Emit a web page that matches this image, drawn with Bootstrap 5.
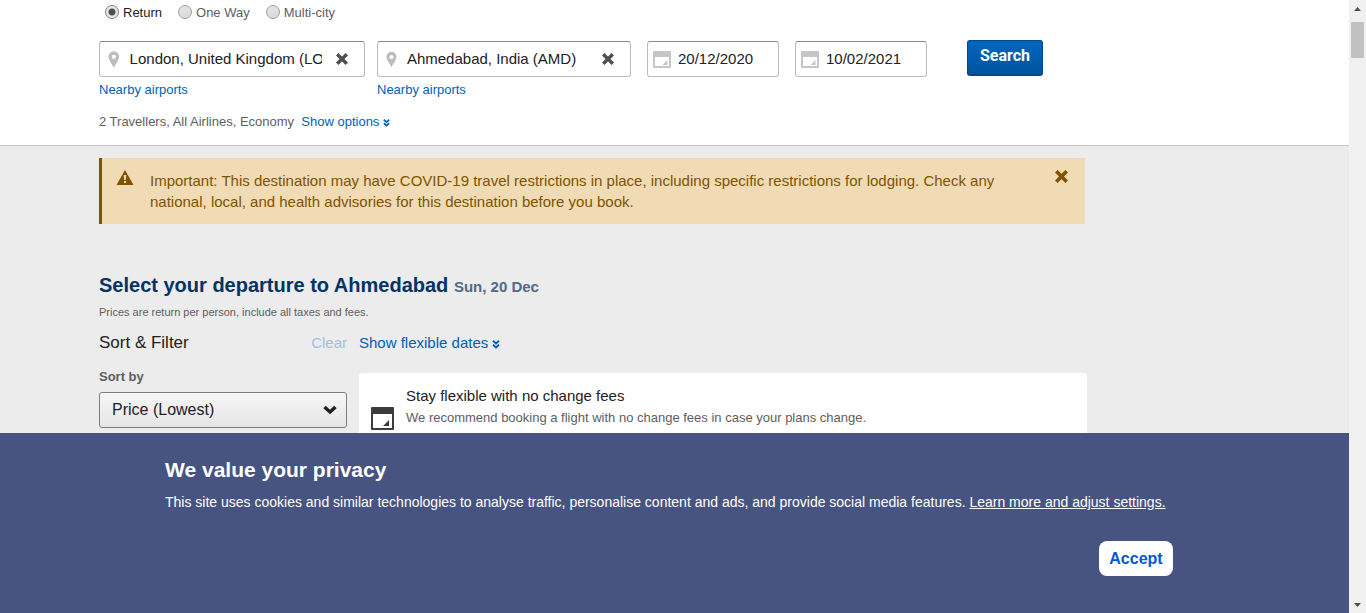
<!DOCTYPE html>
<html lang="en">
<head>
<meta charset="utf-8">
<meta name="viewport" content="width=device-width, initial-scale=1">
<title>Flights to Ahmedabad</title>
<link href="https://cdn.jsdelivr.net/npm/bootstrap@5.3.0/dist/css/bootstrap.min.css" rel="stylesheet">
<style>
  body { font-family: "Liberation Sans", Arial, sans-serif; font-size: 13px; line-height: 16px; color: #5e5e5e; background: #ececec; }
  a { color: #0061b8; text-decoration: none; }
  .wrap { max-width: 1151px; margin: 0 auto; }
  .search-panel { background: #fff; border-bottom: 1px solid #c6c6c6; padding: 4px 0 15px; }
  .trip { height: 18px; padding-left: 6px; }
  .trip input { appearance: none; width: 14px; height: 14px; margin: 0 4px 2px 0; border: 1px solid #a0a0a0; border-radius: 50%; background: linear-gradient(#e4e4e4, #dadada); }
  .trip input:checked { border-color: #808080; background: radial-gradient(circle, #4f4f4f 0 3px, #e8e8e8 4px); }
  .trip input:checked + label { color: #222; }
  .fields { padding-top: 18px; }
  .field { padding-top: 1px; }
  .field-box { height: 36px; border: 1px solid #bcbcbc; border-top-color: #888; border-radius: 3px; background: #fff; padding: 0 8px; margin-bottom: 5px; }
  .field-box input { min-width: 0; border: 0; padding: 0; outline: 0; background: transparent; color: #222; font-size: 15px; }
  .airport { margin: 0 14px 0 10px; }
  .origin { width: 266px; }
  .destination { width: 254px; }
  .travel-date { width: 132px; }
  .travel-date .field-box { padding: 0 5px; gap: 7px; }
  .clear-btn { border: 0; padding: 0; background: none; line-height: 0; color: #4f4f4f; }
  .search-btn { height: 36px; width: 76px; padding: 0 0 3px; border: 1px solid #00488f; border-bottom-width: 2px; border-radius: 3px; background: linear-gradient(#0066bd, #00549c); color: #fff; font-family: Roboto, sans-serif; font-size: 16px; font-weight: 700; }
  .notice { width: 986px; max-width: 100%; margin-top: 12px; border-left: 3px solid #7f5300; background: #f0dbb5; color: #7f5300; padding: 12px 17px 12px 14px; font-size: 15px; line-height: 21px; }
  .notice .clear-btn { color: #7f5300; }
  .results-title { margin: 49px 0 0; font-size: 20px; line-height: 24px; font-weight: 700; color: #003366; }
  .results-title span { font-size: 15px; color: #4f6b87; }
  .price-note { font-size: 11px; margin: 5px 0 0; }
  .results { padding-top: 9px; }
  .filters { width: 248px; }
  .sort-label { font-weight: 700; margin-bottom: 7px; }
  .filter-title { font-size: 17px; line-height: 20px; color: #222; font-weight: 400; }
  .filter-select { width: 100%; height: 36px; appearance: none; border: 1px solid #7d7d7d; border-radius: 3px; background: linear-gradient(#f6f6f6, #e5e5e5); padding: 0 12px; font-size: 16px; color: #222; }
  .chevron { right: 10px; top: 13px; pointer-events: none; }
  .flex-link { font-size: 15px; line-height: 20px; }
  .dimmed { color: #a0c0dd; }
  .offers { width: 728px; }
  .offer { background: #fff; border-radius: 3px 3px 0 0; padding: 13px 12px; height: 100px; gap: 12px; }
  .offer svg { margin-top: 21px; }
  .offer h3 { font-size: 15px; line-height: 20px; color: #222; font-weight: 400; margin: 0 0 4px; }
  .privacy { background: #475380; color: #fff; padding: 24px 0 37px; }
  .privacy .inner { max-width: 1019px; margin: 0 auto; }
  .privacy h2 { font-size: 21px; line-height: 26px; font-weight: 700; margin: 0 0 10px; }
  .privacy p { font-size: 14px; line-height: 18px; margin: 0 0 30px; }
  .privacy a { color: #fff; text-decoration: underline; }
  .accept { width: 74px; height: 35px; border: 0; border-radius: 8px; margin-right: 11px; padding: 0; background: #fff; color: #0057e0; font-weight: 700; font-size: 16px; }
  .scroll-rail { width: 17px; background: #f1f1f1; padding: 7px 0 6px; }
  .scroll-thumb { width: 13px; height: 36px; background: #c1c1c1; margin-top: 11px; }
</style>
</head>
<body>
<svg width="0" height="0" class="position-absolute" aria-hidden="true">
  <symbol id="pin" viewBox="0 0 12 17"><path fill="currentColor" fill-rule="evenodd" d="M6 0a5.500 5.500 0 0 0-5.500 5.500C.5 9 4 13 6 17c2-4 5.500-8 5.500-11.500A5.500 5.500 0 0 0 6 0Zm0 3.500a2.200 2.200 0 1 1 0 4.400 2.200 2.200 0 0 1 0-4.400Z"/></symbol>
  <symbol id="cal-small" viewBox="0 0 18 17"><path fill="currentColor" fill-rule="evenodd" d="M1 0h16a1 1 0 0 1 1 1v15a1 1 0 0 1-1 1H1a1 1 0 0 1-1-1V1a1 1 0 0 1 1-1Zm1 6v9h14V6ZM14.500 9v5H9.500Z"/></symbol>
  <symbol id="cal" viewBox="0 0 23 23"><path fill="currentColor" fill-rule="evenodd" d="M1 0h21a1 1 0 0 1 1 1v21a1 1 0 0 1-1 1H1a1 1 0 0 1-1-1V1a1 1 0 0 1 1-1Zm1 7v14h19V7ZM18 13v6h-6Z"/></symbol>
  <symbol id="cross" viewBox="0 0 12 12"><path stroke="currentColor" stroke-width="3.400" d="m1.200 1.200 9.600 9.600m0-9.600-9.600 9.600"/></symbol>
  <symbol id="down2" viewBox="0 0 8 9"><path fill="none" stroke="currentColor" stroke-width="2" d="m1 .8 3 2.600L7 .8M1 4.800l3 2.600 3-2.600"/></symbol>
</svg>
<div class="d-flex vh-100 overflow-hidden">
  <div class="d-flex flex-column flex-fill">
    <main class="flex-fill overflow-hidden" style="flex-basis:0">
      <form class="search-panel">
        <div class="wrap">
          <div class="trip d-flex align-items-center gap-3">
            <div class="d-flex align-items-center"><input type="radio" name="trip" id="ret" checked><label for="ret">Return</label></div>
            <div class="d-flex align-items-center"><input type="radio" name="trip" id="one"><label for="one">One Way</label></div>
            <div class="d-flex align-items-center"><input type="radio" name="trip" id="multi"><label for="multi">Multi-city</label></div>
          </div>
          <div class="fields d-flex">
            <div class="field origin me-2">
              <div class="field-box d-flex align-items-center">
                <svg width="12" height="17" style="color:#bdbdbd"><use href="#pin"/></svg>
                <input class="airport flex-fill" type="text" aria-label="Flying from" value="London, United Kingdom (LON)">
                <button type="button" class="clear-btn me-2" aria-label="Clear origin"><svg width="12" height="12"><use href="#cross"/></svg></button>
              </div>
              <a href="#">Nearby airports</a>
            </div>
            <div class="field destination ms-1 me-3">
              <div class="field-box d-flex align-items-center">
                <svg width="12" height="17" style="color:#bdbdbd"><use href="#pin"/></svg>
                <input class="airport flex-fill" type="text" aria-label="Flying to" value="Ahmedabad, India (AMD)">
                <button type="button" class="clear-btn me-2" aria-label="Clear destination"><svg width="12" height="12"><use href="#cross"/></svg></button>
              </div>
              <a href="#">Nearby airports</a>
            </div>
            <div class="field travel-date me-3"><div class="field-box d-flex align-items-center">
              <svg width="18" height="17" class="flex-shrink-0" style="color:#c6c6c6"><use href="#cal-small"/></svg>
              <input class="w-100" type="text" aria-label="Departing" value="20/12/2020">
            </div></div>
            <div class="field travel-date me-4"><div class="field-box d-flex align-items-center">
              <svg width="18" height="17" class="flex-shrink-0" style="color:#c6c6c6"><use href="#cal-small"/></svg>
              <input class="w-100" type="text" aria-label="Returning" value="10/02/2021">
            </div></div>
            <button type="submit" class="search-btn ms-3">Search</button>
          </div>
          <div class="pt-3">2 Travellers, All Airlines, Economy <a href="#">&nbsp;Show options <svg width="7" height="8"><use href="#down2"/></svg></a></div>
        </div>
      </form>
      <div class="wrap">
        <div class="notice d-flex" role="alert">
          <svg width="18" height="15" viewBox="0 0 17 15" class="flex-shrink-0 me-3"><path fill="#7f5300" fill-rule="evenodd" d="M8.500 0 17 15H0ZM7.200 5l.5 5h1.600l.5-5Zm.3 6v2h2v-2Z"/></svg>
          <div class="flex-fill pe-5">Important: This destination may have COVID-19 travel restrictions in place, including specific restrictions for lodging. Check any national, local, and health advisories for this destination before you book.</div>
          <button type="button" class="clear-btn align-self-start" aria-label="Dismiss"><svg width="13" height="13"><use href="#cross"/></svg></button>
        </div>
        <h1 class="results-title">Select your departure to Ahmedabad <span>Sun, 20 Dec</span></h1>
        <p class="price-note">Prices are return per person, include all taxes and fees.</p>
        <div class="results d-flex gap-2">
          <div class="filters me-1 pt-1">
            <div class="d-flex justify-content-between mb-3"><h2 class="filter-title mb-0">Sort &amp; Filter</h2><a href="#" class="flex-link dimmed">Clear</a></div>
            <label for="sort" class="sort-label">Sort by</label>
            <div class="position-relative">
              <select id="sort" class="filter-select"><option>Price (Lowest)</option></select>
              <svg class="chevron position-absolute" width="14" height="10" viewBox="0 0 14 10"><path fill="none" stroke="#222" stroke-width="3.500" d="m1.500 2 5.500 5 5.500-5"/></svg>
            </div>
          </div>
          <div class="offers pt-1">
            <a href="#" class="flex-link d-block mb-3 pb-1">Show flexible dates <svg width="8" height="9"><use href="#down2"/></svg></a>
            <div class="offer d-flex">
              <svg width="23" height="23" class="flex-shrink-0" style="color:#3c3c3c"><use href="#cal"/></svg>
              <div><h3>Stay flexible with no change fees</h3>We recommend booking a flight with no change fees in case your plans change.</div>
            </div>
          </div>
        </div>
      </div>
    </main>
    <section class="privacy" aria-label="Privacy">
      <div class="inner">
        <h2>We value your privacy</h2>
        <p>This site uses cookies and similar technologies to analyse traffic, personalise content and ads, and provide social media features. <a href="#">Learn more and adjust settings.</a></p>
        <div class="d-flex justify-content-end"><button type="button" class="accept">Accept</button></div>
      </div>
    </section>
  </div>
  <div class="scroll-rail d-flex flex-column align-items-center flex-shrink-0" aria-hidden="true">
    <svg width="7" height="4" viewBox="0 0 7 4"><path fill="#505050" d="M3.500 0 7 4H0Z"/></svg>
    <div class="scroll-thumb"></div>
    <svg class="mt-auto" width="7" height="4" viewBox="0 0 7 4"><path fill="#505050" d="M3.500 4 7 0H0Z"/></svg>
  </div>
</div>
<script src="https://cdn.jsdelivr.net/npm/bootstrap@5.3.0/dist/js/bootstrap.bundle.min.js"></script>
</body>
</html>
